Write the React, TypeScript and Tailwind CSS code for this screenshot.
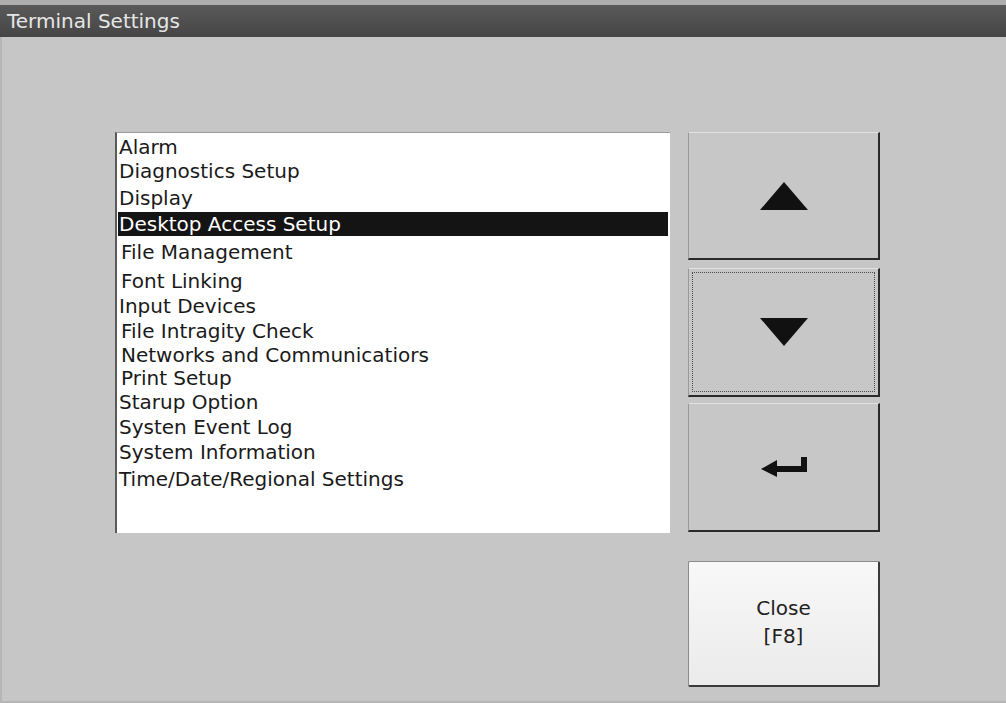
const items = [
  { label: "Alarm", h: "h-[22px]" },
  { label: "Diagnostics Setup", h: "h-[25px]" },
  { label: "Display", h: "h-[29px]" },
  { label: "Desktop Access Setup", h: "h-[24px]", selected: true },
  { label: "File Management", h: "h-[32px]", indent: true },
  { label: "Font Linking", h: "h-[25px]", indent: true },
  { label: "Input Devices", h: "h-[26px]" },
  { label: "File Intragity Check", h: "h-[24px]", indent: true },
  { label: "Networks and Communicatiors", h: "h-[23px]", indent: true },
  { label: "Print Setup", h: "h-[23px]", indent: true },
  { label: "Starup Option", h: "h-[25px]" },
  { label: "Systen Event Log", h: "h-[25px]" },
  { label: "System Information", h: "h-[25px]" },
  { label: "Time/Date/Regional Settings", h: "h-[29px]" },
];

function KeyButton(props: { className: string; focused?: boolean; children: React.ReactNode }) {
  return (
    <div
      className={`flex items-center justify-center border-t border-l border-t-[#e2e2e2] border-l-[#9a9a9a] border-r-2 border-b-2 border-r-[#2a2a2a] border-b-[#2a2a2a] bg-[#c7c7c7] p-[3px] ${props.className}`}
    >
      <div
        className={`flex h-full w-full items-center justify-center ${
          props.focused ? "border border-dotted border-[#4a4a4a]" : ""
        }`}
      >
        {props.children}
      </div>
    </div>
  );
}

export default function App() {
  return (
    <div className="flex h-[703px] w-[1006px] flex-col overflow-hidden bg-[#c6c6c6] font-['DejaVu_Sans',sans-serif]">
      <div className="h-[5px] bg-[#aeaeae]" />
      <div className="flex h-[32px] items-center bg-gradient-to-b from-[#5a5a5a] to-[#454545] pl-[7px] text-[20px] text-[#e6e6e6]">
        Terminal Settings
      </div>
      <div className="flex flex-1 border-l-2 border-b-2 border-[#b6b6b6] pl-[113px] pt-[95px]">
        <div className="h-[401px] w-[555px] border-l-2 border-t border-l-[#5a5a5a] border-t-[#9a9a9a] bg-white pl-[1px] pt-[3px] text-[20px] leading-none text-[#1a1a1a]">
          {items.map((item) => (
            <div
              className={`flex items-center ${item.indent ? "pl-[3px]" : "pl-[1px]"} ${item.h} ${
                item.selected ? "mr-[2px] bg-[#141414] text-white" : ""
              }`}
              key={item.label}
            >
              {item.label}
            </div>
          ))}
        </div>
        <div className="ml-[18px] flex w-[192px] flex-col">
          <KeyButton className="h-[128px]">
            <svg width="48" height="28" viewBox="0 0 48 28">
              <polygon points="24,0 48,28 0,28" fill="#111" />
            </svg>
          </KeyButton>
          <KeyButton className="mt-[8px] h-[129px]" focused>
            <svg width="48" height="28" viewBox="0 0 48 28">
              <polygon points="0,0 48,0 24,28" fill="#111" />
            </svg>
          </KeyButton>
          <KeyButton className="mt-[6px] h-[129px]">
            <svg width="46" height="20" viewBox="0 0 46 20">
              <polygon points="0,12 16,3 16,20" fill="#111" />
              <rect x="14" y="9" width="32" height="6" fill="#111" />
              <rect x="40" y="0" width="6" height="15" fill="#111" />
            </svg>
          </KeyButton>
          <div className="mt-[29px] flex h-[126px] flex-col items-center justify-center rounded-[2px] border-t border-l border-[#8a8a8a] border-r-2 border-b-2 border-r-[#3a3a3a] border-b-[#3a3a3a] bg-gradient-to-b from-[#f8f8f8] to-[#ebebeb] pb-[4px] text-[20px] leading-[28px] text-[#222]">
            <span>Close</span>
            <span>[F8]</span>
          </div>
        </div>
      </div>
    </div>
  );
}
